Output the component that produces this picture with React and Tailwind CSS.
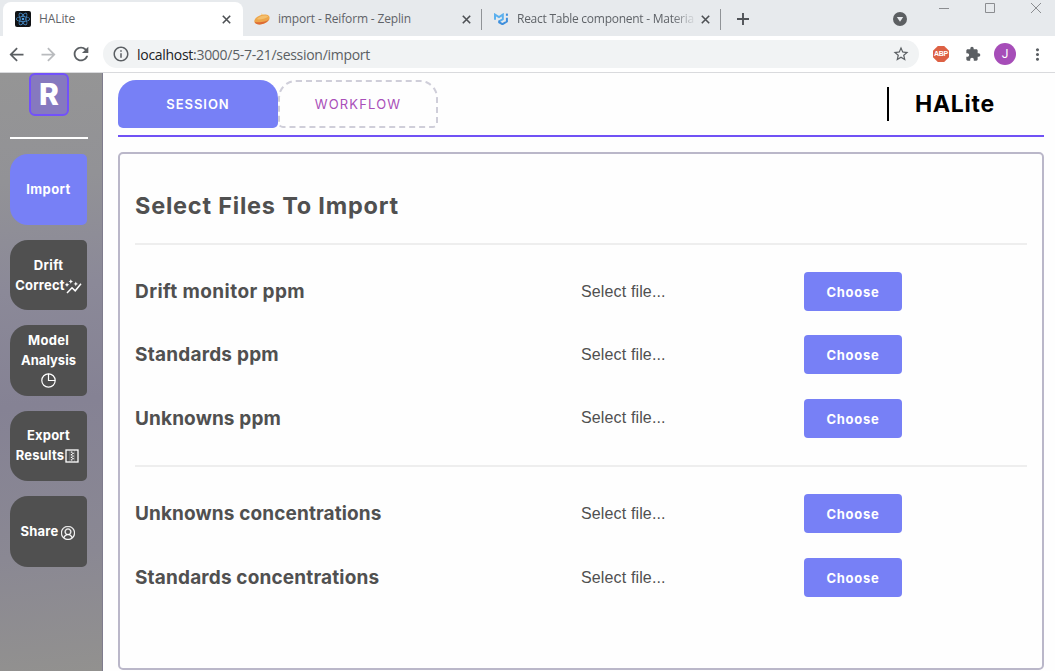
import React from "react";
import { VscAccount } from "react-icons/vsc";
import { MdExtension, MdStarBorder, MdRefresh, MdArrowBack, MdArrowForward, MdInfoOutline, MdMoreVert } from "react-icons/md";
import { SiReact } from "react-icons/si";

const CloseIcon = () => (
  <svg className="block h-[9px] w-[9px] shrink-0" viewBox="0 0 9 9" stroke="#4d5054" strokeWidth="1.6">
    <path d="M.8 .8l7.4 7.4M8.2 .8L.8 8.2" />
  </svg>
);

const ZeplinIcon = () => (
  <svg className="block h-4 w-4" viewBox="0 0 16 16">
    <path d="M7 2.2l3 1.6-3 1.4z" fill="#f6d9a6" />
    <path d="M.3 10.2C.6 6.6 6 3.6 10.600 3.600c3.600 0 5 1.600 5 3.400 0 3.200-5.500 6.400-10 6.400C2.300 13.400.2 12.200.3 10.200z" fill="#eda54a" />
    <path d="M.8 10.700c2.500 1.100 12 .6 14.500-2.700-1.200 3-5.800 5.400-9.700 5.400-2.600 0-4.500-1-4.800-2.700z" fill="#dd6a35" />
    <path d="M2.600 8.300c2-2.300 5-3.700 8.200-3.700 1.800 0 3 .4 3.600 1.200-3 2-8 2.900-11.800 2.500z" fill="#f4bf6c" />
  </svg>
);

const MuiIcon = () => (
  <svg className="block h-[12px] w-[14px] shrink-0" viewBox="0 0 14 12" fill="none" strokeWidth="2">
    <path d="M1 6.800V1.600l4 2.400 3.800-2.400v4.600L5.200 8.300" stroke="#5bb0ee" />
    <path d="M5.200 7.600v1.700l3.300 1.900 4.400-2.700V4.800" stroke="#3f8fdc" />
    <path d="M12.900 .6v2.200" stroke="#3f8fdc" />
  </svg>
);

const GraphIcon = () => (
  <svg className="inline-block h-[17px] w-[17px] align-[-5px]" viewBox="0 0 17 17" fill="none" stroke="#fff">
    <path d="M2 15l5-5.200 3.200 3L16 5.800" strokeWidth="1.5" />
    <path d="M2 4.500l.7 1.600 1.600.7-1.600.7L2 9.100l-.7-1.600-1.600-.7 1.600-.7zM5.800 1.300l.7 1.500 1.500.7-1.500.7-.7 1.500-.7-1.500-1.500-.7 1.500-.7zM10.800 3.600l.7 1.600 1.600.7-1.600.7-.7 1.600-.7-1.600-1.600-.7 1.600-.7z" fill="#fff" stroke="none" />
  </svg>
);

const PieIcon = () => (
  <svg className="block h-[15px] w-[15px]" viewBox="0 0 15 15" fill="none" stroke="#fff" strokeWidth="1.2">
    <circle cx="7.500" cy="7.500" r="6.700" />
    <path d="M7.500 .8v6.700h6.700" />
  </svg>
);

const ZipIcon = () => (
  <svg className="ml-px inline-block h-[14px] w-[14px] align-[-3px]" viewBox="0 0 14 14" fill="none" stroke="#fff">
    <rect x="1" y="1" width="12" height="12" strokeWidth="1.300" />
    <path d="M4.800 1v12M9.600 1v12" strokeWidth=".4" opacity=".5" />
    <path d="M6.600 2.500v9" strokeWidth="1.500" strokeDasharray="1.300 1.300" />
    <path d="M8 3.800v7" strokeWidth="1.500" strokeDasharray="1.300 1.300" />
  </svg>
);

function TabStrip() {
  return (
    <div className="flex h-9 items-start bg-[#e7eaed] text-[12px] text-[#5f6368]">
      <div className="ml-[3px] flex h-[34px] w-[240px] shrink-0 items-center self-end rounded-t-lg bg-white pl-3 pr-[12px]">
        <div className="grid h-4 w-4 place-items-center rounded-[2px] bg-[#101215]"><SiReact size={14} color="#4d9be0" /></div>
        <span className="ml-2 flex-1 tracking-[-0.1px]">HALite</span>
        <CloseIcon />
      </div>
      <div className="flex h-[38px] w-[238px] shrink-0 items-center pl-[11px] pr-[10px]">
        <ZeplinIcon />
        <span className="ml-2 flex-1 tracking-[-0.16px]">import - Reiform - Zeplin</span>
        <CloseIcon />
      </div>
      <div className="mt-[9px] h-[21px] w-px bg-[#909397]" />
      <div className="flex h-[38px] w-[238px] shrink-0 items-center pl-[12px] pr-[10px]">
        <MuiIcon />
        <span className="ml-[9px] whitespace-nowrap tracking-[-0.26px] [mask-image:linear-gradient(to_right,black_155px,transparent_180px)]">React Table component - Materia</span>
        <span className="flex-1" />
        <CloseIcon />
      </div>
      <div className="mt-[9px] h-[21px] w-px bg-[#909397]" />
      <svg className="ml-4 mt-[13px] h-3 w-3" viewBox="0 0 12 12" stroke="#505357" strokeWidth="1.9"><path d="M6 0v12M0 6h12" /></svg>
      <svg className="ml-auto mt-3 h-[14px] w-[14px]" viewBox="0 0 14 14"><circle cx="7" cy="7" r="7" fill="#5c5f62" /><path d="M3.800 5h6.400L7 9.800z" fill="#e7eaed" /></svg>
      <div className="ml-8 mr-[14px] flex w-[102px] justify-between">
        <svg className="mt-[3px] h-[10px] w-[10px]" viewBox="0 0 10 10" stroke="#8b8d90"><path d="M0 5.500h10" /></svg>
        <svg className="mt-[3px] h-[10px] w-[10px]" viewBox="0 0 10 10" stroke="#8b8d90" fill="none"><path d="M.5 .5h9v9h-9z" /></svg>
        <svg className="mt-[3px] h-[10px] w-[10px]" viewBox="0 0 10 10" stroke="#8b8d90"><path d="M0 0l10 10M10 0L0 10" /></svg>
      </div>
    </div>
  );
}

function Toolbar() {
  return (
    <div className="flex h-[37px] items-center border-b border-[#d9dadd] bg-white text-[#5b5f63]">
      <MdArrowBack className="ml-[6px]" size={21} />
      <MdArrowForward className="ml-[11px] text-[#b9bbbe]" size={21} />
      <MdRefresh className="ml-[11px]" size={22} />
      <div className="ml-[11px] flex h-7 w-[816px] items-center rounded-full bg-[#f1f3f4] pl-[9px] pr-[9px]">
        <MdInfoOutline size={18} />
        <span className="ml-[7px] flex-1 text-[14px] tracking-[-0.29px]"><span className="text-[#202124]">localhost</span>:3000/5-7-21/session/import</span>
        <MdStarBorder size={18} />
      </div>
      <div className="ml-[14px] grid h-4 w-4 place-items-center bg-[#dd6144] font-['Liberation_Sans',sans-serif] text-[7px] font-bold tracking-[-0.2px] text-white [clip-path:polygon(30%_0,70%_0,100%_30%,100%_70%,70%_100%,30%_100%,0_70%,0_30%)]">ABP</div>
      <MdExtension className="ml-4" size={16} />
      <div className="ml-[13px] grid h-[22px] w-[22px] place-items-center rounded-full bg-[#a64db8] font-['Roboto',sans-serif] text-[12px] text-white">J</div>
      <MdMoreVert className="ml-3" size={19} />
    </div>
  );
}

const tile = "flex h-[70.5px] w-[77px] shrink-0 flex-col items-center justify-center whitespace-nowrap rounded-l-[18px] rounded-r-[5px] text-[13px] font-bold leading-5 text-white";

function Sidebar() {
  return (
    <aside className="flex w-[103px] shrink-0 flex-col border-r border-[#7f7c8d] bg-[linear-gradient(174deg,#959595_0%,#929296_18%,#8b8998_36%,#858294_55%,#8a8893_80%,#92918f_100%)] pl-[10px]">
      <div className="ml-[19px] grid h-[43px] w-10 shrink-0 place-items-center rounded-[6px] border-2 border-[#7251fb] bg-[#8679bf] pb-px text-[30px] font-extrabold leading-none text-white">R</div>
      <div className="mb-[15px] mt-[21px] h-[2px] w-[78px] shrink-0 bg-white" />
      <nav className="flex flex-col gap-[15px]">
        <div className={tile + " bg-[#7780f6]"}><span className="tracking-[0.4px]">Import</span></div>
        <div className={tile + " bg-[#505050]"}><span className="tracking-[0.4px]">Drift</span><span><span className="tracking-[0.2px]">Correct</span><GraphIcon /></span></div>
        <div className={tile + " bg-[#505050]"}><span className="tracking-[0.3px]">Model</span><span>Analysis</span><div className="mb-[2px] mt-[3px]"><PieIcon /></div></div>
        <div className={tile + " pb-px pr-[2px] bg-[#505050]"}><span className="pl-[2px] tracking-[0.2px]">Export</span><span><span className="tracking-[0.2px]">Results</span><ZipIcon /></span></div>
        <div className={tile + " pr-[2px] bg-[#505050]"}><span><span className="tracking-[0.25px]">Share</span><VscAccount className="ml-[2px] inline-block align-[-4px] stroke-[0.4px] stroke-white" size={14} /></span></div>
      </nav>
    </aside>
  );
}

function FileRow({ label, spacing }) {
  return (
    <div className="grid h-[39px] grid-cols-[2fr_1fr_1fr] items-center">
      <div className={"text-[19px] font-bold leading-none text-[#505050] " + spacing}>{label}</div>
      <div className="font-['Liberation_Sans',sans-serif] text-[16px] leading-none tracking-[0.14px] text-[#505050]">Select file...</div>
      <button className="h-[39px] w-[98px] rounded-[4px] bg-[#7780f6] pt-[2px] text-[13px] font-bold tracking-[0.75px] text-white">Choose</button>
    </div>
  );
}

function Main() {
  return (
    <main className="flex min-w-0 flex-1 flex-col pl-[15px] pr-[11px] pt-[7px]">
      <header className="flex h-[57px] shrink-0 items-start border-b-2 border-[#7052f5]">
        <div className="grid h-12 w-[160px] place-items-center rounded-b-[5px] rounded-t-[18px] bg-[#7780f6] pt-px text-[13px] font-semibold tracking-[0.95px] text-white">SESSION</div>
        <div className="grid h-12 w-[160px] place-items-center rounded-b-[5px] rounded-t-[18px] border-2 border-dashed border-[#cfced9] pt-px text-[13px] font-normal tracking-[1.15px] text-[#a94fb9]">WORKFLOW</div>
        <div className="ml-auto mr-[49px] mt-[7px] flex h-[34px] items-center border-l-2 border-black pl-[26px] text-[23px] font-bold tracking-[0.75px] text-black">HALite</div>
      </header>
      <section className="mt-[15px] flex h-[518px] shrink-0 flex-col rounded-[5px] border-2 border-[#bab7c9] px-[15px]">
        <h1 className="flex h-[91px] items-end border-b-2 border-[#eeeeee] pb-[25px] text-[23.5px] font-bold leading-[24px] tracking-[0.78px] text-[#505050]">Select Files To Import</h1>
        <div className="flex h-[222px] flex-col gap-[24.4px] border-b-2 border-[#eeeeee] pt-[27px]">
          <FileRow label="Drift monitor ppm" spacing="tracking-[0.42px]" />
          <FileRow label="Standards ppm" spacing="tracking-[0.22px]" />
          <FileRow label="Unknowns ppm" spacing="tracking-[0.13px]" />
        </div>
        <div className="flex flex-col gap-[25px] pt-[27px]">
          <FileRow label="Unknowns concentrations" spacing="tracking-[0.12px]" />
          <FileRow label="Standards concentrations" spacing="tracking-[0.16px]" />
        </div>
      </section>
    </main>
  );
}

export default function App() {
  return (
    <div className="flex h-[671px] w-[1055px] flex-col overflow-hidden bg-[#fefefe] font-['Inter',sans-serif]">
      <div className="shrink-0 font-['Open_Sans',sans-serif]">
        <TabStrip />
        <Toolbar />
      </div>
      <div className="flex min-h-0 flex-1">
        <Sidebar />
        <Main />
      </div>
    </div>
  );
}
